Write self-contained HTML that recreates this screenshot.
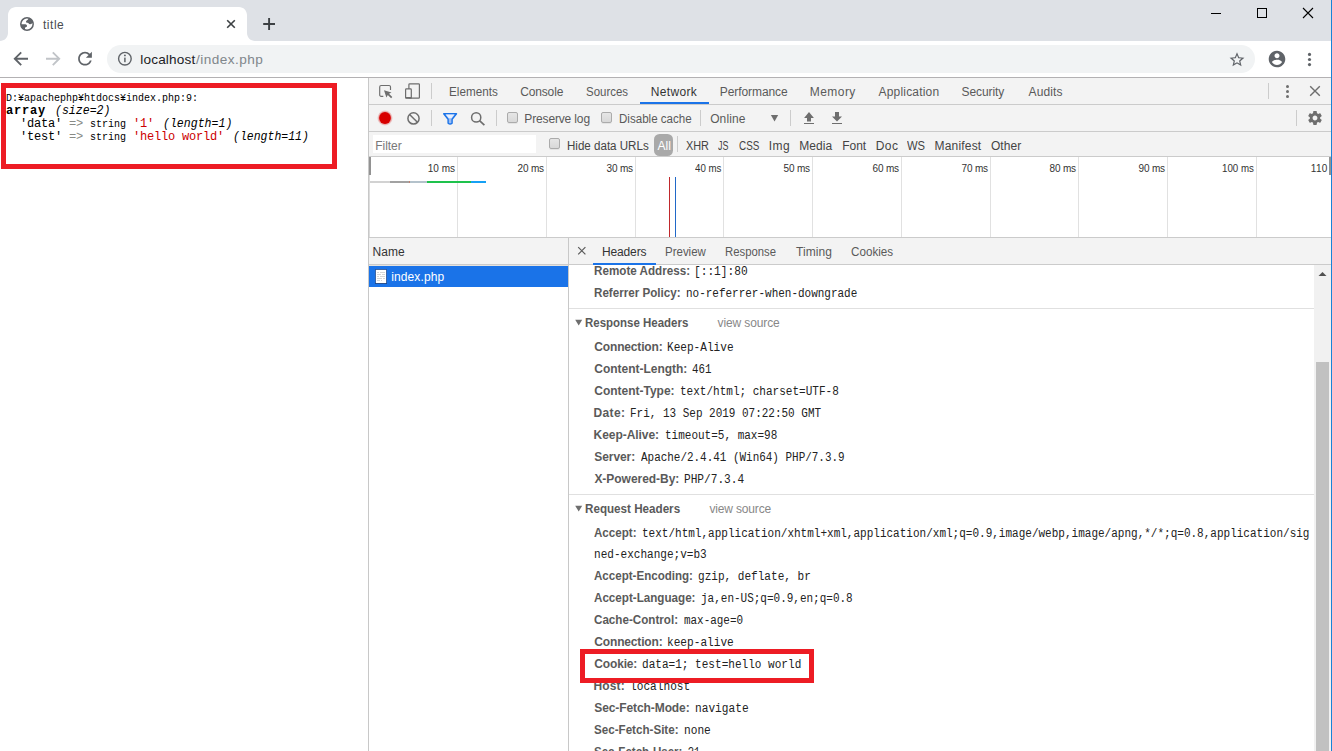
<!DOCTYPE html>
<html lang="en">
<head>
<meta charset="utf-8">
<title>title</title>
<style>
html,body{margin:0;padding:0;}
body{width:1332px;height:751px;overflow:hidden;position:relative;background:#fff;font-family:"Liberation Sans",sans-serif;}
.b{position:absolute;}
.t{position:absolute;white-space:pre;line-height:normal;}
svg{position:absolute;left:0;top:0;overflow:visible;}
.cb{position:absolute;width:9px;height:9px;border:1px solid #ababab;border-radius:2px;background:linear-gradient(#e6e6e6,#d8d8d8);box-shadow:0 1px 0 rgba(0,0,0,0.06);}
</style>
</head>
<body>
<!-- ===== browser chrome ===== -->
<div class="b" style="left:0;top:0;width:1332px;height:41px;background:#dee1e6;"></div>
<div class="b" style="left:0;top:41px;width:1332px;height:36px;background:#fff;"></div>
<div class="b" style="left:0;top:77px;width:1332px;height:1px;background:#b3b1b3;"></div>
<div class="b" style="left:107px;top:45px;width:1148px;height:28px;border-radius:14px;background:#f1f3f4;"></div>

<!-- ===== page ===== -->
<div class="b" style="left:0;top:78px;width:368px;height:673px;background:#fff;"></div>

<!-- ===== devtools ===== -->
<div class="b" style="left:368px;top:78px;width:1px;height:673px;background:#c8c8c8;"></div>
<div class="b" style="left:369px;top:78px;width:962px;height:79px;background:#f3f3f3;"></div>
<div class="b" style="left:369px;top:104px;width:962px;height:1px;background:#cbcbcb;"></div>
<div class="b" style="left:369px;top:131px;width:962px;height:1px;background:#cbcbcb;"></div>
<div class="b" style="left:369px;top:156px;width:962px;height:1px;background:#cbcbcb;"></div>
<!-- selected tab underline -->
<div class="b" style="left:640px;top:102px;width:69px;height:2px;background:#1a73e8;"></div>
<!-- separators -->
<div class="b" style="left:431px;top:83px;width:1px;height:16px;background:#ccc;"></div>
<div class="b" style="left:1268px;top:83px;width:1px;height:16px;background:#ccc;"></div>
<div class="b" style="left:431px;top:110px;width:1px;height:16px;background:#ccc;"></div>
<div class="b" style="left:496px;top:110px;width:1px;height:16px;background:#ccc;"></div>
<div class="b" style="left:700px;top:110px;width:1px;height:16px;background:#ccc;"></div>
<div class="b" style="left:790px;top:110px;width:1px;height:16px;background:#ccc;"></div>
<div class="b" style="left:1296px;top:110px;width:1px;height:16px;background:#ccc;"></div>
<div class="b" style="left:677px;top:136px;width:1px;height:16px;background:#ccc;"></div>
<!-- filter input -->
<div class="b" style="left:373px;top:135px;width:163px;height:18px;background:#fff;"></div>
<!-- All badge -->
<div class="b" style="left:654px;top:134px;width:19px;height:22px;border-radius:5.5px;background:#a9a9a9;"></div>
<!-- checkboxes -->
<div class="cb" style="left:507px;top:112px;"></div>
<div class="cb" style="left:601px;top:112px;"></div>
<div class="cb" style="left:549px;top:138px;"></div>

<!-- overview -->
<div class="b" style="left:369px;top:157px;width:962px;height:80px;background:#fff;"></div>
<div class="b" style="left:369px;top:237px;width:962px;height:1px;background:#cbcbcb;"></div>
<div class="b" style="left:457px;top:157px;width:1px;height:80px;background:#e1e1e1;"></div>
<div class="b" style="left:546px;top:157px;width:1px;height:80px;background:#e1e1e1;"></div>
<div class="b" style="left:635px;top:157px;width:1px;height:80px;background:#e1e1e1;"></div>
<div class="b" style="left:723px;top:157px;width:1px;height:80px;background:#e1e1e1;"></div>
<div class="b" style="left:812px;top:157px;width:1px;height:80px;background:#e1e1e1;"></div>
<div class="b" style="left:901px;top:157px;width:1px;height:80px;background:#e1e1e1;"></div>
<div class="b" style="left:990px;top:157px;width:1px;height:80px;background:#e1e1e1;"></div>
<div class="b" style="left:1078px;top:157px;width:1px;height:80px;background:#e1e1e1;"></div>
<div class="b" style="left:1167px;top:157px;width:1px;height:80px;background:#e1e1e1;"></div>
<div class="b" style="left:1256px;top:157px;width:1px;height:80px;background:#e1e1e1;"></div>

<div class="b" style="left:369px;top:157px;width:2px;height:18px;background:#929292;"></div>
<div class="b" style="left:1329px;top:157px;width:2px;height:18px;background:#929292;"></div>
<!-- overview bars -->
<div class="b" style="left:369px;top:175px;width:1px;height:62px;background:#dcdcdc;"></div>
<div class="b" style="left:370px;top:181px;width:20px;height:2px;background:#d2d2d2;"></div>
<div class="b" style="left:390px;top:181px;width:19px;height:2px;background:#a2a2a2;"></div>
<div class="b" style="left:409px;top:181px;width:1px;height:2px;background:#c08070;"></div>
<div class="b" style="left:410px;top:181px;width:17px;height:2px;background:#b4c2cb;"></div>
<div class="b" style="left:427px;top:181px;width:44px;height:2px;background:#1ec24c;"></div>
<div class="b" style="left:471px;top:181px;width:15px;height:2px;background:#16a0f4;"></div>
<div class="b" style="left:669px;top:177px;width:1px;height:60px;background:#c0282c;"></div>
<div class="b" style="left:675px;top:177px;width:1px;height:60px;background:#2068c8;"></div>

<!-- name column + details header -->
<div class="b" style="left:369px;top:238px;width:962px;height:26px;background:#f3f3f3;"></div>
<div class="b" style="left:369px;top:264px;width:962px;height:1px;background:#cbcbcb;"></div>
<div class="b" style="left:369px;top:265px;width:199px;height:1px;background:#e6e3df;"></div>
<div class="b" style="left:369px;top:266px;width:199px;height:21px;background:#1a73e8;"></div>
<div class="b" style="left:568px;top:238px;width:1px;height:513px;background:#c8c8c8;"></div>
<div class="b" style="left:593px;top:263px;width:63px;height:2px;background:#1a73e8;"></div>
<!-- section dividers -->
<div class="b" style="left:569px;top:308px;width:745px;height:1px;background:#e0e0e0;"></div>
<div class="b" style="left:569px;top:494px;width:745px;height:1px;background:#e0e0e0;"></div>
<!-- scrollbar -->
<div class="b" style="left:1314px;top:265px;width:17px;height:486px;background:#f1f1f1;"></div>
<div class="b" style="left:1316px;top:362px;width:13px;height:389px;background:#c1c1c1;"></div>

<!-- window right edge -->
<div class="b" style="left:1331px;top:0;width:1px;height:751px;background:#1883d7;"></div>

<svg width="1332" height="751" viewBox="0 0 1332 751">
<!-- active tab shape -->
<path d="M0,41 C4.4,41 8,37.4 8,33 L8,15 C8,10.6 11.6,7 16,7 L239,7 C243.4,7 247,10.6 247,15 L247,33 C247,37.4 250.6,41 255,41 Z" fill="#fff"/>
<!-- favicon globe -->
<clipPath id="gc"><circle cx="27" cy="24" r="6.400"/></clipPath>
<circle cx="27" cy="24" r="6.200" fill="#fff" stroke="#5f6368" stroke-width="1.500"/>
<g clip-path="url(#gc)" fill="#5f6368">
<path d="M25.900,21.700 Q26,20.600 27.700,19.800 L28.600,18.400 L34,17 L34,23 L32.300,23.100 Q31.400,24.400 29.800,24.300 Q28.800,24 28.300,23.100 Q27.300,22.500 26.200,22.500 Z"/>
<path d="M20,24.300 L25.600,24.300 Q27.200,24.900 27.100,26.200 Q26.600,27.200 25.100,27.500 L24.800,31 L20,31 Z"/>
</g>
<!-- tab close / new tab -->
<path d="M227.2,20.2 L234.8,27.8 M234.8,20.2 L227.2,27.8" stroke="#3c4043" stroke-width="1.6" fill="none"/>
<path d="M263.2,24 H275 M269.1,18.1 V29.9" stroke="#3c4043" stroke-width="1.9" fill="none"/>
<!-- window controls -->
<rect x="1211" y="13" width="10" height="1" fill="#000"/>
<rect x="1257.500" y="8.500" width="9" height="9" fill="none" stroke="#000" stroke-width="1"/>
<path d="M1303,8 L1313,18 M1313,8 L1303,18" stroke="#000" stroke-width="1.1" fill="none"/>
<!-- nav buttons -->
<path d="M28,58.7 H15.6 M21.2,52.3 L14.8,58.7 L21.2,65.1" stroke="#5f6368" stroke-width="1.9" fill="none"/>
<path d="M46,58.7 H58.4 M52.8,52.3 L59.2,58.7 L52.8,65.1" stroke="#c1c4c8" stroke-width="1.9" fill="none"/>
<g transform="translate(74.68,48.38) scale(0.86)" fill="#5f6368"><path d="M17.65 6.35C16.2 4.9 14.21 4 12 4c-4.42 0-7.99 3.580-7.990 8s3.570 8 7.990 8c3.730 0 6.840-2.550 7.730-6h-2.080c-.82 2.330-3.040 4-5.650 4-3.310 0-6-2.690-6-6s2.690-6 6-6c1.660 0 3.140.69 4.220 1.780L13 11h7V4l-2.350 2.350z"/></g>
<!-- info icon -->
<circle cx="124.900" cy="58.700" r="6.300" fill="none" stroke="#5f6368" stroke-width="1.400"/>
<circle cx="124.900" cy="55.400" r="0.950" fill="#5f6368"/>
<rect x="124.150" y="57.600" width="1.500" height="4.600" fill="#5f6368"/>
<!-- star -->
<g transform="translate(1228.12,50.79) scale(0.74)" fill="#5f6368"><path d="M22 9.240l-7.190-.62L12 2 9.190 8.630 2 9.240l5.460 4.730L5.820 21 12 17.270 18.180 21l-1.630-7.030L22 9.240zM12 15.400l-3.760 2.270 1-4.280-3.320-2.880 4.380-.38L12 6.100l1.710 4.040 4.380.38-3.320 2.880 1 4.280L12 15.400z"/></g>
<!-- profile -->
<g transform="translate(1267.04,49.04) scale(0.83)" fill="#5f6368"><path d="M12 2C6.480 2 2 6.480 2 12s4.480 10 10 10 10-4.480 10-10S17.520 2 12 2zm0 3c1.660 0 3 1.340 3 3s-1.340 3-3 3-3-1.340-3-3 1.340-3 3-3zm0 14.200c-2.500 0-4.710-1.280-6-3.220.03-1.990 4-3.080 6-3.080 1.990 0 5.970 1.090 6 3.080-1.290 1.940-3.500 3.220-6 3.220z"/></g>
<!-- menu -->
<circle cx="1309.500" cy="54.400" r="1.600" fill="#5f6368"/><circle cx="1309.500" cy="59.500" r="1.600" fill="#5f6368"/><circle cx="1309.500" cy="64.600" r="1.600" fill="#5f6368"/>

<!-- devtools: inspect -->
<path d="M390.500,90 V86.900 a1.400,1.400 0 0 0 -1.400,-1.400 H381.100 a1.400,1.400 0 0 0 -1.400,1.400 V94.900 a1.400,1.400 0 0 0 1.400,1.400 H383.300" fill="none" stroke="#6e6e6e" stroke-width="1.150"/>
<path d="M384,90.200 L391.500,92.500 L389,93.800 L392.300,97.100 L391.100,98.300 L387.800,95 L386.400,97.500 Z" fill="#6e6e6e"/>
<!-- devtools: device -->
<rect x="408.900" y="83.800" width="10.500" height="14.400" rx="0.800" fill="none" stroke="#6e6e6e" stroke-width="1.200"/>
<rect x="405.600" y="88.900" width="5.700" height="9.300" rx="0.800" fill="#f3f3f3" stroke="#6e6e6e" stroke-width="1.200"/>
<rect x="405.600" y="97" width="5.700" height="1.400" fill="#6e6e6e"/>
<!-- record / clear -->
<circle cx="385" cy="118" r="7.600" fill="#d80000" opacity="0.14"/><circle cx="385" cy="118" r="6.800" fill="#d80000" opacity="0.22"/>
<circle cx="385" cy="118" r="5.900" fill="#d80000"/>
<circle cx="413.500" cy="118.400" r="5.600" fill="none" stroke="#6e6e6e" stroke-width="1.500"/>
<path d="M409.600,114.500 L417.400,122.300" stroke="#6e6e6e" stroke-width="1.500"/>
<!-- funnel / search -->
<path d="M443.700,113.700 H456.500 L452.100,119.200 V123.300 Q450.100,124.700 448.100,123.300 V119.200 Z" fill="#9bbdf5" stroke="#1a73e8" stroke-width="1.400" stroke-linejoin="round"/>
<path d="M445.800,114.600 H454.400 L451.400,118.300 H448.800 Z" fill="#e8f0fe"/>
<circle cx="476.200" cy="117.400" r="4.600" fill="none" stroke="#6e6e6e" stroke-width="1.500"/>
<path d="M479.500,120.700 L484.400,125.200" stroke="#6e6e6e" stroke-width="1.700"/>
<!-- dropdown / upload / download -->
<path d="M770.900,115.100 H778.200 L774.550,121.400 Z" fill="#6e6e6e"/>
<path d="M809,112.100 L813.900,117.900 H811 V121.600 H807 V117.900 H804.100 Z" fill="#6e6e6e"/>
<rect x="804" y="123" width="10" height="1" fill="#6e6e6e"/>
<path d="M835,112.100 H839 V116.400 H842 L837,121.500 L832,116.400 H835 Z" fill="#6e6e6e"/>
<rect x="832" y="123" width="10" height="1" fill="#6e6e6e"/>
<!-- gear / more / close -->
<g transform="translate(1306.72,109.72) scale(0.69)" fill="#6e6e6e"><path d="M19.430 12.980c.04-.32.07-.64.07-.98s-.03-.66-.07-.98l2.110-1.650c.19-.15.24-.42.12-.64l-2-3.460c-.12-.22-.39-.3-.61-.22l-2.490 1c-.52-.4-1.080-.73-1.690-.98l-.38-2.650C14.460 2.180 14.250 2 14 2h-4c-.25 0-.46.18-.49.42l-.38 2.650c-.61.25-1.170.59-1.690.98l-2.490-1c-.23-.09-.49 0-.61.22l-2 3.460c-.13.22-.07.49.12.64l2.110 1.650c-.04.32-.07.65-.07.980s.03.66.07.980l-2.110 1.650c-.19.15-.24.42-.12.640l2 3.460c.12.22.39.3.61.22l2.490-1c.52.4 1.080.73 1.690.98l.38 2.650c.03.24.24.42.49.420h4c.25 0 .46-.18.49-.42l.38-2.650c.61-.25 1.170-.59 1.690-.98l2.490 1c.23.09.49 0 .61-.22l2-3.460c.12-.22.07-.49-.12-.64l-2.110-1.650zM12 15.500c-1.930 0-3.500-1.570-3.500-3.500s1.570-3.500 3.500-3.500 3.500 1.570 3.500 3.500-1.570 3.500-3.500 3.500z"/></g>
<circle cx="1287.500" cy="86.500" r="1.500" fill="#6e6e6e"/><circle cx="1287.500" cy="91.500" r="1.500" fill="#6e6e6e"/><circle cx="1287.500" cy="96.600" r="1.500" fill="#6e6e6e"/>
<path d="M1310.200,86.200 L1319.800,95.800 M1319.800,86.200 L1310.200,95.800" stroke="#6e6e6e" stroke-width="1.400" fill="none"/>
<!-- details close -->
<path d="M578.200,247.200 L585.400,254.400 M585.400,247.200 L578.200,254.400" stroke="#5a5a5a" stroke-width="1.200" fill="none"/>
<!-- file icon -->
<rect x="375.500" y="269.500" width="11" height="14" fill="#fff" stroke="#0c2f6e" stroke-opacity="0.600" stroke-width="1"/>
<rect x="375" y="283" width="12" height="1" fill="#0a2a66" fill-opacity="0.350"/>
<path d="M377,272.500 H379 M380,272.500 H385 M377,274.500 H381 M382,274.500 H385 M377,276.500 H379 M380,276.500 H385 M377,278.500 H382 M383,278.500 H385 M377,280.500 H380 M381,280.500 H382" stroke="#d6d6d6" stroke-width="1"/>
<!-- section triangles -->
<path d="M575.200,319.700 H582.200 L578.700,325.500 Z" fill="#6e6e6e"/>
<path d="M575.200,505.700 H582.200 L578.700,511.500 Z" fill="#6e6e6e"/>
<!-- scrollbar arrow -->
<path d="M1318.500,276 H1326.500 L1322.500,272 Z" fill="#505050"/>
</svg>


<div class="t" style="left:42.91px;top:18.00px;font:normal normal 12px 'Liberation Sans', sans-serif;color:#494c50;letter-spacing:0.548px;">title</div>
<div class="t" style="left:140.30px;top:52.00px;font:normal normal 13.6px 'Liberation Sans', sans-serif;color:#202124;letter-spacing:0.155px;">localhost</div>
<div class="t" style="left:196.11px;top:52.00px;font:normal normal 13.6px 'Liberation Sans', sans-serif;color:#80868b;letter-spacing:0.454px;">/index.php</div>
<div class="t" style="left:449.03px;top:85.00px;font:normal normal 12px 'Liberation Sans', sans-serif;color:#5a5a5a;transform:scaleX(0.9746);transform-origin:0 0;">Elements</div>
<div class="t" style="left:520.18px;top:85.00px;font:normal normal 12px 'Liberation Sans', sans-serif;color:#5a5a5a;letter-spacing:-0.142px;">Console</div>
<div class="t" style="left:585.75px;top:85.00px;font:normal normal 12px 'Liberation Sans', sans-serif;color:#5a5a5a;transform:scaleX(0.9547);transform-origin:0 0;">Sources</div>
<div class="t" style="left:650.70px;top:85.00px;font:normal normal 12px 'Liberation Sans', sans-serif;color:#333;letter-spacing:0.361px;">Network</div>
<div class="t" style="left:719.80px;top:85.00px;font:normal normal 12px 'Liberation Sans', sans-serif;color:#5a5a5a;letter-spacing:-0.080px;">Performance</div>
<div class="t" style="left:809.80px;top:85.00px;font:normal normal 12px 'Liberation Sans', sans-serif;color:#5a5a5a;letter-spacing:0.444px;">Memory</div>
<div class="t" style="left:878.58px;top:85.00px;font:normal normal 12px 'Liberation Sans', sans-serif;color:#5a5a5a;letter-spacing:0.178px;">Application</div>
<div class="t" style="left:961.50px;top:85.00px;font:normal normal 12px 'Liberation Sans', sans-serif;color:#5a5a5a;letter-spacing:-0.069px;">Security</div>
<div class="t" style="left:1028.58px;top:85.00px;font:normal normal 12px 'Liberation Sans', sans-serif;color:#5a5a5a;letter-spacing:0.113px;">Audits</div>
<div class="t" style="left:524.30px;top:112.00px;font:normal normal 12px 'Liberation Sans', sans-serif;color:#5a5a5a;letter-spacing:-0.146px;">Preserve log</div>
<div class="t" style="left:618.54px;top:112.00px;font:normal normal 12px 'Liberation Sans', sans-serif;color:#5a5a5a;transform:scaleX(0.9646);transform-origin:0 0;">Disable cache</div>
<div class="t" style="left:710.20px;top:112.00px;font:normal normal 12px 'Liberation Sans', sans-serif;color:#5a5a5a;letter-spacing:0.100px;">Online</div>
<div class="t" style="left:375.30px;top:139.00px;font:normal normal 12px 'Liberation Sans', sans-serif;color:#787878;letter-spacing:-0.054px;">Filter</div>
<div class="t" style="left:566.54px;top:139.00px;font:normal normal 12px 'Liberation Sans', sans-serif;color:#444;transform:scaleX(0.9645);transform-origin:0 0;">Hide data URLs</div>
<div class="t" style="left:657.38px;top:139.00px;font:normal normal 12px 'Liberation Sans', sans-serif;color:#fff;letter-spacing:0.162px;">All</div>
<div class="t" style="left:685.53px;top:139.00px;font:normal normal 12px 'Liberation Sans', sans-serif;color:#444;transform:scaleX(0.9068);transform-origin:0 0;">XHR</div>
<div class="t" style="left:718.10px;top:139.00px;font:normal normal 12px 'Liberation Sans', sans-serif;color:#444;transform:scaleX(0.7450);transform-origin:0 0;">JS</div>
<div class="t" style="left:738.93px;top:139.00px;font:normal normal 12px 'Liberation Sans', sans-serif;color:#444;transform:scaleX(0.8248);transform-origin:0 0;">CSS</div>
<div class="t" style="left:768.63px;top:139.00px;font:normal normal 12px 'Liberation Sans', sans-serif;color:#444;letter-spacing:0.583px;">Img</div>
<div class="t" style="left:799.30px;top:139.00px;font:normal normal 12px 'Liberation Sans', sans-serif;color:#444;letter-spacing:0.044px;">Media</div>
<div class="t" style="left:842.30px;top:139.00px;font:normal normal 12px 'Liberation Sans', sans-serif;color:#444;letter-spacing:-0.073px;">Font</div>
<div class="t" style="left:875.70px;top:139.00px;font:normal normal 12px 'Liberation Sans', sans-serif;color:#444;letter-spacing:0.475px;">Doc</div>
<div class="t" style="left:907.40px;top:139.00px;font:normal normal 12px 'Liberation Sans', sans-serif;color:#444;transform:scaleX(0.9349);transform-origin:0 0;">WS</div>
<div class="t" style="left:934.50px;top:139.00px;font:normal normal 12px 'Liberation Sans', sans-serif;color:#444;letter-spacing:0.192px;">Manifest</div>
<div class="t" style="left:990.90px;top:139.00px;font:normal normal 12px 'Liberation Sans', sans-serif;color:#444;letter-spacing:0.055px;">Other</div>
<div class="t" style="left:427.67px;top:163.00px;font:normal normal 10px 'Liberation Sans', sans-serif;color:#333;letter-spacing:0.056px;">10 ms</div>
<div class="t" style="left:517.54px;top:163.00px;font:normal normal 10px 'Liberation Sans', sans-serif;color:#333;letter-spacing:-0.161px;">20 ms</div>
<div class="t" style="left:606.51px;top:163.00px;font:normal normal 10px 'Liberation Sans', sans-serif;color:#333;letter-spacing:-0.153px;">30 ms</div>
<div class="t" style="left:694.67px;top:163.00px;font:normal normal 10px 'Liberation Sans', sans-serif;color:#333;transform:scaleX(0.9712);transform-origin:0 0;">40 ms</div>
<div class="t" style="left:783.49px;top:163.00px;font:normal normal 10px 'Liberation Sans', sans-serif;color:#333;letter-spacing:-0.150px;">50 ms</div>
<div class="t" style="left:872.52px;top:163.00px;font:normal normal 10px 'Liberation Sans', sans-serif;color:#333;letter-spacing:-0.157px;">60 ms</div>
<div class="t" style="left:961.48px;top:163.00px;font:normal normal 10px 'Liberation Sans', sans-serif;color:#333;letter-spacing:-0.147px;">70 ms</div>
<div class="t" style="left:1049.56px;top:163.00px;font:normal normal 10px 'Liberation Sans', sans-serif;color:#333;letter-spacing:-0.166px;">80 ms</div>
<div class="t" style="left:1138.54px;top:163.00px;font:normal normal 10px 'Liberation Sans', sans-serif;color:#333;letter-spacing:-0.162px;">90 ms</div>
<div class="t" style="left:1222.00px;top:163.00px;font:normal normal 10px 'Liberation Sans', sans-serif;color:#333;transform:scaleX(0.9736);transform-origin:0 0;">100 ms</div>
<div class="t" style="left:1310.87px;top:163.00px;font:normal normal 10px 'Liberation Sans', sans-serif;color:#333;letter-spacing:0.312px;">110</div>
<div class="t" style="left:372.50px;top:245.00px;font:normal normal 12px 'Liberation Sans', sans-serif;color:#333;letter-spacing:0.042px;">Name</div>
<div class="t" style="left:391.22px;top:270.00px;font:normal normal 12px 'Liberation Sans', sans-serif;color:#fff;letter-spacing:0.111px;">index.php</div>
<div class="t" style="left:602.00px;top:245.00px;font:normal normal 12px 'Liberation Sans', sans-serif;color:#333;letter-spacing:-0.143px;">Headers</div>
<div class="t" style="left:665.04px;top:245.00px;font:normal normal 12px 'Liberation Sans', sans-serif;color:#5a5a5a;transform:scaleX(0.9574);transform-origin:0 0;">Preview</div>
<div class="t" style="left:725.06px;top:245.00px;font:normal normal 12px 'Liberation Sans', sans-serif;color:#5a5a5a;transform:scaleX(0.9436);transform-origin:0 0;">Response</div>
<div class="t" style="left:796.06px;top:245.00px;font:normal normal 12px 'Liberation Sans', sans-serif;color:#5a5a5a;letter-spacing:0.064px;">Timing</div>
<div class="t" style="left:851.39px;top:245.00px;font:normal normal 12px 'Liberation Sans', sans-serif;color:#5a5a5a;transform:scaleX(0.9710);transform-origin:0 0;">Cookies</div>
<div class="t" style="left:593.63px;top:264.00px;font:normal bold 12px 'Liberation Sans', sans-serif;color:#5a5a5a;transform:scaleX(0.9711);transform-origin:0 0;">Remote Address:</div>
<div class="t" style="left:694.44px;top:265.00px;font:normal normal 12px 'Liberation Mono', monospace;color:#222;transform:scaleX(0.9315);transform-origin:0 0;">[::1]:80</div>
<div class="t" style="left:593.63px;top:286.00px;font:normal bold 12px 'Liberation Sans', sans-serif;color:#5a5a5a;transform:scaleX(0.9684);transform-origin:0 0;">Referrer Policy:</div>
<div class="t" style="left:686.05px;top:287.00px;font:normal normal 12px 'Liberation Mono', monospace;color:#222;transform:scaleX(0.9147);transform-origin:0 0;">no-referrer-when-downgrade</div>
<div class="t" style="left:584.74px;top:316.00px;font:normal bold 12px 'Liberation Sans', sans-serif;color:#5a5a5a;transform:scaleX(0.9562);transform-origin:0 0;">Response Headers</div>
<div class="t" style="left:717.58px;top:316.00px;font:normal normal 12px 'Liberation Sans', sans-serif;color:#888;letter-spacing:-0.120px;">view source</div>
<div class="t" style="left:594.33px;top:340.00px;font:normal bold 12px 'Liberation Sans', sans-serif;color:#5a5a5a;letter-spacing:-0.164px;">Connection:</div>
<div class="t" style="left:667.38px;top:341.00px;font:normal normal 12px 'Liberation Mono', monospace;color:#222;transform:scaleX(0.9243);transform-origin:0 0;">Keep-Alive</div>
<div class="t" style="left:594.33px;top:362.00px;font:normal bold 12px 'Liberation Sans', sans-serif;color:#5a5a5a;letter-spacing:-0.023px;">Content-Length:</div>
<div class="t" style="left:692.32px;top:363.00px;font:normal normal 12px 'Liberation Mono', monospace;color:#222;transform:scaleX(0.8989);transform-origin:0 0;">461</div>
<div class="t" style="left:594.33px;top:384.00px;font:normal bold 12px 'Liberation Sans', sans-serif;color:#5a5a5a;letter-spacing:-0.017px;">Content-Type:</div>
<div class="t" style="left:679.52px;top:385.00px;font:normal normal 12px 'Liberation Mono', monospace;color:#222;transform:scaleX(0.9185);transform-origin:0 0;">text/html; charset=UTF-8</div>
<div class="t" style="left:593.60px;top:406.00px;font:normal bold 12px 'Liberation Sans', sans-serif;color:#5a5a5a;letter-spacing:0.322px;">Date:</div>
<div class="t" style="left:629.51px;top:407.00px;font:normal normal 12px 'Liberation Mono', monospace;color:#222;transform:scaleX(0.9149);transform-origin:0 0;">Fri, 13 Sep 2019 07:22:50 GMT</div>
<div class="t" style="left:593.60px;top:428.00px;font:normal bold 12px 'Liberation Sans', sans-serif;color:#5a5a5a;letter-spacing:-0.051px;">Keep-Alive:</div>
<div class="t" style="left:664.52px;top:429.00px;font:normal normal 12px 'Liberation Mono', monospace;color:#222;transform:scaleX(0.9169);transform-origin:0 0;">timeout=5, max=98</div>
<div class="t" style="left:594.25px;top:450.00px;font:normal bold 12px 'Liberation Sans', sans-serif;color:#5a5a5a;letter-spacing:-0.074px;">Server:</div>
<div class="t" style="left:640.71px;top:451.00px;font:normal normal 12px 'Liberation Mono', monospace;color:#222;transform:scaleX(0.9121);transform-origin:0 0;">Apache/2.4.41 (Win64) PHP/7.3.9</div>
<div class="t" style="left:594.39px;top:472.00px;font:normal bold 12px 'Liberation Sans', sans-serif;color:#5a5a5a;letter-spacing:-0.032px;">X-Powered-By:</div>
<div class="t" style="left:683.57px;top:473.00px;font:normal normal 12px 'Liberation Mono', monospace;color:#222;transform:scaleX(0.9286);transform-origin:0 0;">PHP/7.3.4</div>
<div class="t" style="left:584.73px;top:502.00px;font:normal bold 12px 'Liberation Sans', sans-serif;color:#5a5a5a;transform:scaleX(0.9703);transform-origin:0 0;">Request Headers</div>
<div class="t" style="left:709.38px;top:502.00px;font:normal normal 12px 'Liberation Sans', sans-serif;color:#888;letter-spacing:-0.150px;">view source</div>
<div class="t" style="left:594.37px;top:526.00px;font:normal bold 12px 'Liberation Sans', sans-serif;color:#5a5a5a;transform:scaleX(0.9654);transform-origin:0 0;">Accept:</div>
<div class="t" style="left:642.02px;top:527.00px;font:normal normal 12px 'Liberation Mono', monospace;color:#222;transform:scaleX(0.9177);transform-origin:0 0;">text/html,application/xhtml+xml,application/xml;q=0.9,image/webp,image/apng,*/*;q=0.8,application/sig</div>
<div class="t" style="left:593.64px;top:548.00px;font:normal normal 12px 'Liberation Mono', monospace;color:#222;transform:scaleX(0.9208);transform-origin:0 0;">ned-exchange;v=b3</div>
<div class="t" style="left:594.37px;top:569.00px;font:normal bold 12px 'Liberation Sans', sans-serif;color:#5a5a5a;transform:scaleX(0.9640);transform-origin:0 0;">Accept-Encoding:</div>
<div class="t" style="left:697.87px;top:570.00px;font:normal normal 12px 'Liberation Mono', monospace;color:#222;transform:scaleX(0.9215);transform-origin:0 0;">gzip, deflate, br</div>
<div class="t" style="left:594.37px;top:591.00px;font:normal bold 12px 'Liberation Sans', sans-serif;color:#5a5a5a;transform:scaleX(0.9696);transform-origin:0 0;">Accept-Language:</div>
<div class="t" style="left:701.46px;top:592.00px;font:normal normal 12px 'Liberation Mono', monospace;color:#222;transform:scaleX(0.9159);transform-origin:0 0;">ja,en-US;q=0.9,en;q=0.8</div>
<div class="t" style="left:594.34px;top:613.00px;font:normal bold 12px 'Liberation Sans', sans-serif;color:#5a5a5a;transform:scaleX(0.9694);transform-origin:0 0;">Cache-Control:</div>
<div class="t" style="left:684.22px;top:614.00px;font:normal normal 12px 'Liberation Mono', monospace;color:#222;transform:scaleX(0.9111);transform-origin:0 0;">max-age=0</div>
<div class="t" style="left:594.33px;top:635.00px;font:normal bold 12px 'Liberation Sans', sans-serif;color:#5a5a5a;letter-spacing:-0.164px;">Connection:</div>
<div class="t" style="left:667.19px;top:636.00px;font:normal normal 12px 'Liberation Mono', monospace;color:#222;transform:scaleX(0.9270);transform-origin:0 0;">keep-alive</div>
<div class="t" style="left:594.33px;top:657.00px;font:normal bold 12px 'Liberation Sans', sans-serif;color:#5a5a5a;letter-spacing:-0.173px;">Cookie:</div>
<div class="t" style="left:641.56px;top:658.00px;font:normal normal 12px 'Liberation Mono', monospace;color:#222;transform:scaleX(0.9216);transform-origin:0 0;">data=1; test=hello world</div>
<div class="t" style="left:593.60px;top:679.00px;font:normal bold 12px 'Liberation Sans', sans-serif;color:#5a5a5a;letter-spacing:0.102px;">Host:</div>
<div class="t" style="left:629.61px;top:680.00px;font:normal normal 12px 'Liberation Mono', monospace;color:#222;transform:scaleX(0.9295);transform-origin:0 0;">localhost</div>
<div class="t" style="left:594.25px;top:701.00px;font:normal bold 12px 'Liberation Sans', sans-serif;color:#5a5a5a;letter-spacing:-0.088px;">Sec-Fetch-Mode:</div>
<div class="t" style="left:694.53px;top:702.00px;font:normal normal 12px 'Liberation Mono', monospace;color:#222;transform:scaleX(0.9306);transform-origin:0 0;">navigate</div>
<div class="t" style="left:594.26px;top:723.00px;font:normal bold 12px 'Liberation Sans', sans-serif;color:#5a5a5a;transform:scaleX(0.9679);transform-origin:0 0;">Sec-Fetch-Site:</div>
<div class="t" style="left:683.53px;top:724.00px;font:normal normal 12px 'Liberation Mono', monospace;color:#222;transform:scaleX(0.9301);transform-origin:0 0;">none</div>
<div class="t" style="left:594.26px;top:745.00px;font:normal bold 12px 'Liberation Sans', sans-serif;color:#5a5a5a;transform:scaleX(0.9607);transform-origin:0 0;">Sec-Fetch-User:</div>
<div class="t" style="left:688.39px;top:746.00px;font:normal normal 12px 'Liberation Mono', monospace;color:#222;transform:scaleX(0.8333);transform-origin:0 0;">?1</div>
<div class="t" style="left:6.00px;top:93.00px;font:normal normal 10px 'Liberation Mono', monospace;color:#000;">D:¥apachephp¥htdocs¥index.php:9:</div>
<div class="t" style="left:6.00px;top:104.00px;font:normal bold 12px 'Liberation Mono', monospace;color:#000;letter-spacing:0.799px;">array</div>
<div class="t" style="left:55.37px;top:104.00px;font:italic normal 12px 'Liberation Mono', monospace;color:#000;transform:scaleX(0.9630);transform-origin:0 0;">(size=2)</div>
<div class="t" style="left:20.00px;top:117.00px;font:normal normal 12px 'Liberation Mono', monospace;color:#000;letter-spacing:-0.201px;">&#x27;data&#x27;</div>
<div class="t" style="left:69.00px;top:117.00px;font:normal normal 12px 'Liberation Mono', monospace;color:#888a85;letter-spacing:-0.201px;">=&gt;</div>
<div class="t" style="left:90.00px;top:119.00px;font:normal normal 10px 'Liberation Mono', monospace;color:#000;">string</div>
<div class="t" style="left:133.00px;top:117.00px;font:normal normal 12px 'Liberation Mono', monospace;color:#cc0000;letter-spacing:-0.201px;">&#x27;1&#x27;</div>
<div class="t" style="left:163.37px;top:117.00px;font:italic normal 12px 'Liberation Mono', monospace;color:#000;transform:scaleX(0.9633);transform-origin:0 0;">(length=1)</div>
<div class="t" style="left:20.00px;top:130.00px;font:normal normal 12px 'Liberation Mono', monospace;color:#000;letter-spacing:-0.201px;">&#x27;test&#x27;</div>
<div class="t" style="left:69.00px;top:130.00px;font:normal normal 12px 'Liberation Mono', monospace;color:#888a85;letter-spacing:-0.201px;">=&gt;</div>
<div class="t" style="left:90.00px;top:132.00px;font:normal normal 10px 'Liberation Mono', monospace;color:#000;">string</div>
<div class="t" style="left:133.00px;top:130.00px;font:normal normal 12px 'Liberation Mono', monospace;color:#cc0000;letter-spacing:-0.201px;">&#x27;hello world&#x27;</div>
<div class="t" style="left:233.38px;top:130.00px;font:italic normal 12px 'Liberation Mono', monospace;color:#000;transform:scaleX(0.9583);transform-origin:0 0;">(length=11)</div>

<!-- annotations (red boxes) -->
<div class="b" style="left:1px;top:83px;width:326px;height:76px;border:5px solid #ed1c24;"></div>
<div class="b" style="left:580px;top:649px;width:224px;height:24px;border:5px solid #ed1c24;"></div>
</body>
</html>
